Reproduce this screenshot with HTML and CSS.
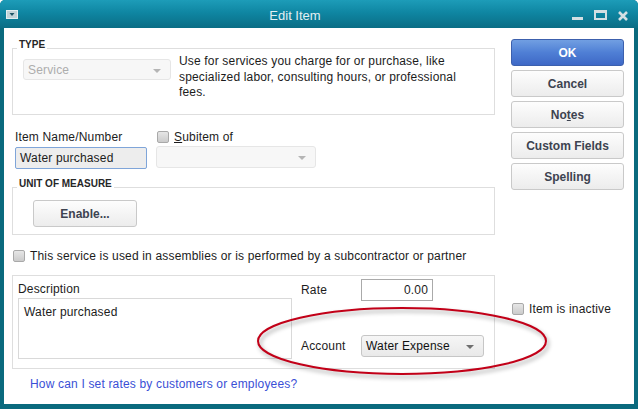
FILE: index.html
```html
<!DOCTYPE html>
<html lang="en">
<head>
    <meta charset="UTF-8">
    <title>Edit Item</title>
    <link rel="stylesheet" href="styles.css">
</head>
<body>
    <div class="window">
        <div class="titlebar">
            <span class="sysmenu">
                <svg width="12" height="9" viewBox="0 0 12 9"><rect x="0.5" y="0.5" width="11" height="8" fill="#c3d3d8" stroke="#e4eef1"/><path d="M3.5 3h5l-2.5 3z" fill="#1f5566"/></svg>
            </span>
            <span class="title">Edit Item</span>
            <span class="controls">
                <svg width="11" height="11" viewBox="0 0 11 11"><rect x="0" y="7" width="11" height="3" fill="#d3dfe3"/></svg>
                <svg width="13" height="11" viewBox="0 0 13 11"><rect x="1" y="1.5" width="11" height="7.5" fill="none" stroke="#d3dfe3" stroke-width="2"/><rect x="0" y="0" width="13" height="3" fill="#d3dfe3"/></svg>
                <svg width="10" height="10" viewBox="0 0 10 10"><path d="M1 1l8 8M9 1l-8 8" stroke="#d3dfe3" stroke-width="2.6"/></svg>
            </span>
        </div>

        <div class="content">
            <div class="main">
                <div class="group type-group">
                    <span class="group-title">TYPE</span>
                    <div class="type-row">
                        <div class="select disabled type-select">Service<i class="arrow"></i></div>
                        <p class="type-desc">Use for services you charge for or purchase, like<br>specialized labor, consulting hours, or professional<br>fees.</p>
                    </div>
                </div>

                <div class="name-row">
                    <div class="name-field">
                        <div class="lbl">Item Name/Number</div>
                        <div class="input focused">Water purchased</div>
                    </div>
                    <div class="sub-field">
                        <div class="check"><span class="box"></span><span><u>S</u>ubitem of</span></div>
                        <div class="select disabled sub-select"><i class="arrow"></i></div>
                    </div>
                </div>

                <div class="group uom-group">
                    <span class="group-title">UNIT OF MEASURE</span>
                    <button class="btn enable-btn">Enable...</button>
                </div>

                <div class="check assembly"><span class="box"></span><span>This service is used in assemblies or is performed by a subcontractor or partner</span></div>

                <div class="rate-box">
                    <div class="desc-col">
                        <div class="lbl">Description</div>
                        <div class="textarea">Water purchased</div>
                    </div>
                    <div class="rate-col">
                        <div class="rate-line">
                            <span class="rate-lbl">Rate</span>
                            <div class="input num">0.00</div>
                        </div>
                        <div class="rate-line account-line">
                            <span class="rate-lbl">Account</span>
                            <div class="select account-select">Water Expense<i class="arrow"></i></div>
                        </div>
                    </div>
                </div>

                <a class="help" href="#">How can I set rates by customers or employees?</a>
            </div>

            <div class="side">
                <button class="btn primary">OK</button>
                <button class="btn">Cancel</button>
                <button class="btn">No<u>t</u>es</button>
                <button class="btn">Custom Fields</button>
                <button class="btn">Spellin<u>g</u></button>
                <div class="check inactive"><span class="box"></span><span>Item is inactive</span></div>
            </div>
        </div>

        <svg class="highlight" width="310" height="90" viewBox="0 0 310 90">
            <ellipse cx="152" cy="41" rx="144" ry="33" fill="none" stroke="#c20018" stroke-width="2"/>
        </svg>
    </div>
</body>
</html>
```

FILE: styles.css
```css
* {
  box-sizing: border-box;
}

body {
  margin: 0;
  background: #fff;
  font-family: "Liberation Sans", Arial, sans-serif;
  font-size: 12px;
  letter-spacing: 0.17px;
  color: #1c1c1c;
}

.window {
  position: relative;
  width: 638px;
  height: 409px;
  background: #0a6a7e;
  border-radius: 5px 5px 0 0;
  padding: 0 4px 5px 4px;
  display: flex;
  flex-direction: column;
}

.titlebar {
  height: 28px;
  margin: 0 -4px;
  padding: 0 10px 0 6px;
  border-radius: 5px 5px 0 0;
  background: linear-gradient(#1d9cb8, #0f86a2 45%, #0a6d85);
  display: flex;
  align-items: center;
}

.sysmenu {
  display: flex;
  margin-top: 1px;
}

.title {
  flex: 1;
  text-align: center;
  color: #e3f0f3;
  font-size: 13px;
  letter-spacing: 0;
  margin-top: 2px;
}

.controls {
  display: flex;
  align-items: flex-end;
  gap: 11px;
  margin-top: 3px;
}

.content {
  flex: 1;
  background: #fff;
  display: flex;
  padding: 0 10px 0 8px;
}

.main {
  width: 483px;
  padding-top: 20px;
  display: flex;
  flex-direction: column;
}

.side {
  width: 113px;
  margin-left: 16px;
  padding-top: 11px;
  display: flex;
  flex-direction: column;
  gap: 4px;
}

/* group boxes */
.group {
  position: relative;
  border: 1px solid #dedede;
}

.group-title {
  position: absolute;
  top: -9px;
  left: 4px;
  padding: 0 2px;
  background: #fff;
  font-size: 10px;
  line-height: 10px;
  letter-spacing: 0;
  font-weight: bold;
  color: #262626;
}

.type-group {
  height: 67px;
  padding: 5px 0 0 10px;
}

.type-row {
  display: flex;
  align-items: flex-start;
}

.type-desc {
  margin: 0 0 0 8px;
  line-height: 15.5px;
}

.lbl {
  line-height: 14px;
}

/* fields */
.select {
  position: relative;
  height: 22px;
  line-height: 20px;
  padding-left: 4px;
  border: 1px solid #c6c6c6;
  border-radius: 3px;
  background: linear-gradient(#f6f6f6, #e9e9e9);
}

.select .arrow {
  position: absolute;
  right: 9px;
  top: 9px;
  border-left: 4px solid transparent;
  border-right: 4px solid transparent;
  border-top: 4px solid #6f6f6f;
}

.select.disabled {
  color: #adadad;
  border-color: #e6e6e6;
  background: #f7f7f7;
}

.select.disabled .arrow {
  border-top-color: #b5b5b5;
}

.type-select {
  width: 148px;
  height: 21px;
  margin-top: 5px;
}

.input {
  height: 22px;
  line-height: 20px;
  padding: 0 4px;
  border: 1px solid #aaa;
  background: #fff;
}

.input.focused {
  border-color: #7fa5d9;
  border-radius: 2px;
  background: #ededed;
}

.input.num {
  width: 72px;
  text-align: right;
}

.textarea {
  width: 274px;
  height: 61px;
  margin-top: 2px;
  padding: 6px 5px;
  line-height: 14px;
  border: 1px solid #d9d9d9;
}

.name-row {
  display: flex;
  margin-top: 15px;
}

.name-field {
  width: 132px;
  margin-left: 3px;
  display: flex;
  flex-direction: column;
  gap: 3px;
}

.sub-field {
  width: 160px;
  margin-left: 9px;
  display: flex;
  flex-direction: column;
  gap: 2px;
}

.sub-field .check {
  margin-left: 1px;
}

.sub-select {
  height: 22px;
}

/* checkboxes */
.check {
  display: flex;
  align-items: center;
  gap: 5px;
  line-height: 14px;
}

.check .box {
  width: 12px;
  height: 12px;
  border: 1px solid #a9a9a9;
  border-radius: 2px;
  background: linear-gradient(#e6e6e6, #cbcbcb);
}

.uom-group {
  height: 48px;
  margin-top: 18px;
  padding: 12px 0 0 20px;
}

.assembly {
  margin: 14px 0 0 1px;
}

.rate-box {
  height: 94px;
  margin-top: 12px;
  border: 1px solid #dedede;
  display: flex;
  align-items: flex-start;
}

.desc-col {
  padding: 6px 0 0 5px;
}

.rate-col {
  margin-left: 9px;
  padding-top: 3px;
}

.rate-line {
  display: flex;
  align-items: center;
  line-height: 14px;
}

.rate-lbl {
  width: 60px;
}

.account-line {
  margin-top: 34px;
}

.account-select {
  width: 123px;
  color: #111;
}

.help {
  margin: 8px 0 0 18px;
  line-height: 14px;
  color: #3a4fd6;
  text-decoration: none;
}

/* buttons */
.btn {
  height: 27px;
  padding: 0;
  font-family: inherit;
  font-size: 12px;
  font-weight: bold;
  letter-spacing: 0;
  color: #3d4350;
  border: 1px solid #c9c9c9;
  border-radius: 3px;
  background: linear-gradient(#fdfdfd, #ececec);
}

.btn.primary {
  color: #fff;
  border-color: #3c60ad;
  background: linear-gradient(#719fe2, #4f7fd5 50%, #3e68c6);
}

.enable-btn {
  width: 104px;
}

.inactive {
  margin: 108px 0 0 1px;
}

.highlight {
  position: absolute;
  left: 250px;
  top: 300px;
  filter: drop-shadow(2px 3px 2px rgba(0, 0, 0, 0.35));
}
```
